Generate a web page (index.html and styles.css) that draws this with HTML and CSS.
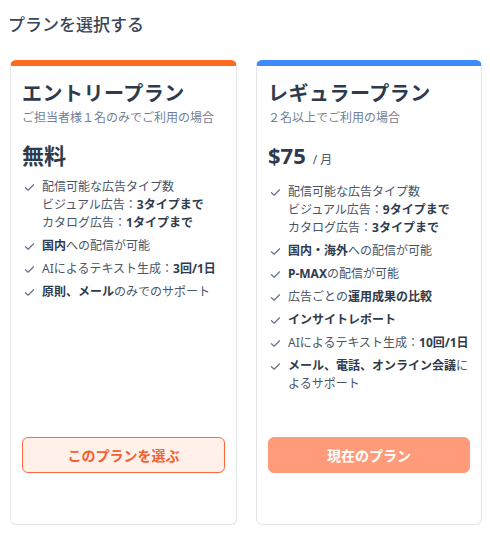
FILE: index.html
```html
<!DOCTYPE html>
<html lang="ja">
<head>
<meta charset="utf-8">
<link rel="stylesheet" href="styles.css">
</head>
<body>
<div class="page">
<h1 class="page-title">プランを選択する</h1>
<div class="plans">
  <section class="card card-entry">
    <h2 class="plan-name">エントリープラン</h2>
    <p class="plan-sub">ご担当者様１名のみでご利用の場合</p>
    <div class="price"><span class="price-main">無料</span></div>
    <ul class="features">
      <li><svg class="check" viewBox="0 0 12 10"><polyline points="1.5,5.2 4.5,8 10.5,2"/></svg><span>配信可能な広告タイプ数<br>ビジュアル広告：<b>3タイプまで</b><br>カタログ広告：<b>1タイプまで</b></span></li>
      <li><svg class="check" viewBox="0 0 12 10"><polyline points="1.5,5.2 4.5,8 10.5,2"/></svg><span><b>国内</b>への配信が可能</span></li>
      <li><svg class="check" viewBox="0 0 12 10"><polyline points="1.5,5.2 4.5,8 10.5,2"/></svg><span>AIによるテキスト生成：<b>3回/1日</b></span></li>
      <li><svg class="check" viewBox="0 0 12 10"><polyline points="1.5,5.2 4.5,8 10.5,2"/></svg><span><b>原則、メール</b>のみでのサポート</span></li>
    </ul>
    <button class="btn btn-select">このプランを選ぶ</button>
  </section>
  <section class="card card-regular">
    <h2 class="plan-name">レギュラープラン</h2>
    <p class="plan-sub">２名以上でご利用の場合</p>
    <div class="price"><span class="price-main">$75</span><span class="price-unit">/ 月</span></div>
    <ul class="features">
      <li><svg class="check" viewBox="0 0 12 10"><polyline points="1.5,5.2 4.5,8 10.5,2"/></svg><span>配信可能な広告タイプ数<br>ビジュアル広告：<b>9タイプまで</b><br>カタログ広告：<b>3タイプまで</b></span></li>
      <li><svg class="check" viewBox="0 0 12 10"><polyline points="1.5,5.2 4.5,8 10.5,2"/></svg><span><b>国内・海外</b>への配信が可能</span></li>
      <li><svg class="check" viewBox="0 0 12 10"><polyline points="1.5,5.2 4.5,8 10.5,2"/></svg><span><b>P-MAX</b>の配信が可能</span></li>
      <li><svg class="check" viewBox="0 0 12 10"><polyline points="1.5,5.2 4.5,8 10.5,2"/></svg><span>広告ごとの<b>運用成果の比較</b></span></li>
      <li><svg class="check" viewBox="0 0 12 10"><polyline points="1.5,5.2 4.5,8 10.5,2"/></svg><span><b>インサイトレポート</b></span></li>
      <li><svg class="check" viewBox="0 0 12 10"><polyline points="1.5,5.2 4.5,8 10.5,2"/></svg><span>AIによるテキスト生成：<b>10回/1日</b></span></li>
      <li><svg class="check" viewBox="0 0 12 10"><polyline points="1.5,5.2 4.5,8 10.5,2"/></svg><span><b>メール、電話、オンライン会議</b>に<br>よるサポート</span></li>
    </ul>
    <button class="btn btn-current">現在のプラン</button>
  </section>
</div>
</div>
</body>
</html>
```
FILE: styles.css
```css
* { box-sizing: border-box; }
body {
  margin: 0;
  font-family: "Noto Sans", "Noto Sans CJK JP", sans-serif;
  color: #3c4858;
  background: #fff;
}
.page {
  padding: 13px 8px 0 8px;
}
.page-title {
  margin: 0;
  font-size: 17px;
  font-weight: 500;
  line-height: 24px;
  color: #3a4556;
}
.plans {
  display: grid;
  grid-template-columns: 227px 226px;
  column-gap: 19px;
  margin: 23px 0 0 2px;
}
.card {
  display: flex;
  flex-direction: column;
  height: 465px;
  border: 1px solid #e3e5e8;
  border-top: 6px solid #ff6a1f;
  border-radius: 6px;
  padding: 14px 11px 51px 11px;
}
.card-regular { border-top-color: #3d8bfd; }
.plan-name {
  margin: 0;
  font-size: 20px;
  font-weight: 700;
  line-height: 28px;
  color: #2f3b4d;
  letter-spacing: 0.5px;
}
.plan-sub {
  margin: 1px 0 0 0;
  font-size: 12px;
  line-height: 17px;
  color: #718096;
}
.price {
  margin-top: 14px;
  display: flex;
  align-items: baseline;
  gap: 7px;
  line-height: 30px;
}
.price-main {
  font-size: 22px;
  font-weight: 700;
  color: #2f3b4d;
}
.price-unit {
  font-size: 12px;
  color: #4a5568;
}
.features {
  list-style: none;
  margin: 8px 0 0 0;
  padding: 0;
  flex: 1;
  display: flex;
  flex-direction: column;
  gap: 5px;
}
.features li {
  display: flex;
  align-items: flex-start;
  gap: 7px;
  font-size: 12px;
  line-height: 18px;
  color: #4a5568;
}
.features b { font-weight: 700; color: #2f3b4d; }
.check {
  flex: none;
  width: 11px;
  height: 9px;
  margin: 5px 0 0 2px;
  fill: none;
  stroke: #66768b;
  stroke-width: 1.4;
  stroke-linecap: round;
  stroke-linejoin: round;
}
.btn {
  flex: none;
  height: 36px;
  border-radius: 6px;
  font-family: inherit;
  font-size: 14px;
  font-weight: 700;
  cursor: pointer;
}
.btn-select {
  background: #fff0ea;
  border: 1px solid #ff6a3d;
  color: #f26232;
}
.btn-current {
  background: #ff9b7b;
  border: 1px solid #ff9b7b;
  color: #fff;
}
```
